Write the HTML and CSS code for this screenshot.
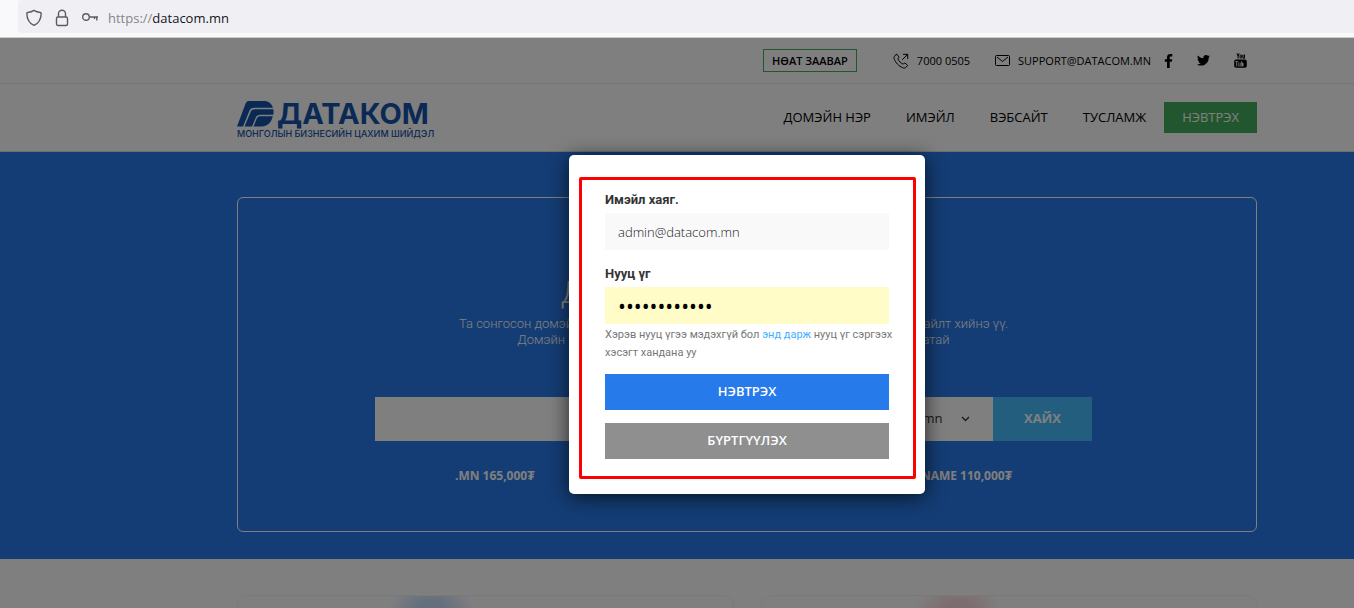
FILE: index.html
```html
<!DOCTYPE html>
<html lang="mn">
<head>
  <meta charset="UTF-8">
  <meta name="viewport" content="width=device-width, initial-scale=1.0">
  <title>Датаком</title>
  <link rel="stylesheet" href="styles.css">
</head>
<body>

  <div class="browser">
    <div class="address">
      <svg width="16" height="18" viewBox="0 0 16 18" fill="none" stroke="#5b5b66" stroke-width="1.4" stroke-linejoin="round"><path d="M8 1.4c2 1.4 4 1.9 6.3 2.1.8.1.9.5.9 1C15 10.3 12.5 14.5 8 16.4 3.5 14.5 1 10.3.8 4.5c0-.5.1-.9.9-1C4 3.3 6 2.8 8 1.4z"/></svg>
      <svg width="14" height="18" viewBox="0 0 14 18" fill="none" stroke="#5b5b66" stroke-width="1.4"><rect x="1.5" y="8" width="11" height="8.5" rx="1.5"/><path d="M3.5 8V4.7a3.5 3.5 0 0 1 7 0V8"/></svg>
      <svg width="18" height="12" viewBox="0 0 18 12" fill="none" stroke="#5b5b66" stroke-width="1.4"><circle cx="4" cy="5" r="3.3"/><path d="M7.3 5H16M12.500 5v2M14.800 5v3.500"/></svg>
      <span class="url"><span class="scheme">https://</span>datacom.mn</span>
    </div>
  </div>

  <div class="page">
    <div class="topbar">
      <div class="container topbar-row">
        <a class="vat" href="#">НӨАТ ЗААВАР</a>
        <a class="contact phone" href="tel:70000505">
          <svg width="16" height="16" viewBox="0 0 16 16" fill="none" stroke="currentColor" stroke-width="1" stroke-linejoin="round" stroke-linecap="round"><path d="M3.2 1.5 1.5 3.2C.3 4.4 1.5 8 4.6 11.2 7.8 14.4 11.3 15.8 12.7 14.6l1.7-1.7c.3-.3.3-.6 0-.9l-2.300-1.800c-.3-.2-.6-.2-.9 0l-1 1c-1.800-.6-4.700-3.400-5.400-5.400l1-1c.2-.3.2-.6 0-.9L4.100 1.500c-.3-.3-.6-.3-.9 0z"/><path d="M9.500 6.500l5-5M10.500 1.300h4.200v4.200"/></svg>
          7000 0505
        </a>
        <a class="contact mail" href="mailto:support@datacom.mn">
          <svg width="15" height="11" viewBox="0 0 15 11" fill="none" stroke="currentColor" stroke-width="1"><rect x=".5" y=".5" width="14" height="10" rx="1"/><path d="M2 2l5.500 4.500L13 2"/></svg>
          SUPPORT@DATACOM.MN
        </a>
        <div class="social">
          <a href="#" aria-label="Facebook"><svg width="9" height="14" viewBox="0 0 9 14"><path fill="currentColor" d="M8.300.1v2.500H6.900c-1 0-1.200.4-1.200 1.100v1.500h2.500l-.3 2.500H5.700V14H3V7.700H.8V5.200H3V3.300C3 1.200 4.300 0 6.200 0c1 0 1.800.1 2.100.1z"/></svg></a>
          <a href="#" aria-label="Twitter"><svg width="13" height="11" viewBox="0 0 13 11"><path fill="currentColor" d="M13 1.300c-.4.5-.8 1-1.300 1.300v.4c0 3.500-2.600 7.600-7.500 7.600C2.600 10.600 1.200 10.200 0 9.400c1.400.1 2.800-.2 3.900-1.100-1.200 0-2.100-.8-2.500-1.900.4.1.8.1 1.200 0C1.400 6.200.5 5.100.5 3.800c.4.2.8.3 1.200.3C.5 3.200.1 1.700.9.500c1.300 1.600 3.300 2.700 5.500 2.800C6 1.500 7.300 0 9 0c.8 0 1.500.3 2 .8.6-.1 1.200-.3 1.700-.6-.2.6-.6 1.100-1.200 1.500.5-.1 1-.2 1.500-.4z"/></svg></a>
          <a href="#" aria-label="YouTube"><svg width="13" height="15" viewBox="0 0 13 15"><path fill="none" stroke="currentColor" stroke-width="1" d="M3 .3l1.100 3v2.300M5.200.3l-1.100 3M6.100 2.600c0-1 1.500-1 1.500 0v1.900c0 1-1.500 1-1.500 0zM8.900 1.700v3.200c0 .7 1 .5 1.500-.2V1.700v3.900"/><path fill="currentColor" fill-rule="evenodd" d="M2.200 6.600h8.600c1.300 0 2 .8 2 2v4.200c0 1.200-.7 2-2 2H2.200c-1.300 0-2-.8-2-2V8.600c0-1.200.7-2 2-2zM1.300 8v.8h1v4.600h.9V8.800h1V8zm3.100 1.500v3.200c0 .9.9.9 1.500.3v.4h.7V9.500h-.7v3c-.3.3-.7.4-.7 0v-3zM7.300 8v5.400H8V13c.6.7 1.500.4 1.500-.6v-2c0-1-.9-1.300-1.500-.6V8z"/></svg></a>
        </div>
      </div>
    </div>

    <div class="header">
      <div class="container header-row">
        <a class="logo" href="#">
          <span class="logo-main">
            <svg width="37" height="26" viewBox="0 0 37 26" fill="#1552a8"><path d="M12 0h15c4.500 0 7.800 2.700 9 6.800H17.500c-2.800 0-4.300 1-5.300 3.400L6 25.500H0L8.500 2.800C9.200.8 10.200 0 12 0z"/><path d="M18.300 8.300H36.300c.4 2 .3 3.700 0 5.400H23.500c-2.500 0-3.800.8-4.800 3l-3.700 8.800H7.500l6.300-14.700c.8-1.800 2-2.500 4.500-2.500z"/><path d="M24 15.200h11.800c-1.500 6-5.300 10.300-11.300 10.300h-8l3.300-8c.8-1.700 2-2.300 4.200-2.300z"/></svg>
            <span class="logo-name">ДАТАКОМ</span>
          </span>
          <span class="logo-slogan">МОНГОЛЫН БИЗНЕСИЙН ЦАХИМ ШИЙДЭЛ</span>
        </a>
        <nav class="menu">
          <a href="#">ДОМЭЙН НЭР</a>
          <a href="#">ИМЭЙЛ</a>
          <a href="#">ВЭБСАЙТ</a>
          <a href="#">ТУСЛАМЖ</a>
          <a class="menu-login" href="#">НЭВТРЭХ</a>
        </nav>
      </div>
    </div>

    <div class="hero">
      <div class="container hero-box">
        <h1>Домэйн нэр бүртгүүлэх</h1>
        <p>Та сонгосон домэйн нэрээ энд бичиж оруулаад бүртгэлтэй эсэхийг шалгаж хайлт хийнэ үү.<br>Домэйн нэрийн бүртгэлийн үнэ болон татвар нь нэг жилийн хугацаатай</p>
        <form class="search">
          <input type="text" aria-label="Домэйн нэр">
          <div class="select">
            <select aria-label="Өргөтгөл">
              <option>.mn</option>
              <option>.com</option>
              <option>.name</option>
            </select>
            <svg width="9" height="6" viewBox="0 0 9 6" fill="none" stroke="#333" stroke-width="1.3"><path d="M1 1l3.500 3.500L8 1"/></svg>
          </div>
          <button type="button">ХАЙХ</button>
        </form>
        <div class="prices">
          <span>.MN 165,000₮</span>
          <span>.COM 55,000₮</span>
          <span>.NAME 110,000₮</span>
        </div>
      </div>
    </div>

    <div class="container cards">
      <div class="card card-blue"></div>
      <div class="card card-red"></div>
    </div>

    <div class="overlay">
      <form class="modal">
        <label for="email">Имэйл хаяг.</label>
        <input id="email" type="text" value="admin@datacom.mn">
        <label for="password">Нууц үг</label>
        <input id="password" class="filled" type="password" value="datacom12345">
        <p>Хэрэв нууц үгээ мэдэхгүй бол <a href="#">энд дарж</a> нууц үг сэргээх<br>хэсэгт хандана уу</p>
        <button class="login" type="button">НЭВТРЭХ</button>
        <button class="register" type="button">БҮРТГҮҮЛЭХ</button>
        <div class="highlight"></div>
      </form>
    </div>
  </div>

</body>
</html>
```
FILE: styles.css
```css
* {
  box-sizing: border-box;
}
body {
  margin: 0;
  height: 100vh;
  display: flex;
  flex-direction: column;
  overflow: hidden;
  font-family: "Open Sans", sans-serif;
  font-size: 13px;
  color: #000;
}
a {
  color: inherit;
  text-decoration: none;
}

/* browser bar */
.browser {
  height: 38px;
  flex: none;
  padding-left: 18px;
  background: #f9f9fb;
  border-bottom: 1px solid #ccc;
}
.address {
  display: flex;
  align-items: center;
  gap: 13px;
  height: 33px;
  padding: 2px 8px 0;
  background: #f0f0f4;
  border-radius: 4px 0 0 4px;
}
.url {
  margin-left: -5px;
  color: #15141a;
}
.scheme {
  color: #85858c;
}

/* the site is wider than the window */
.page {
  position: relative;
  flex: 1;
  min-height: 0;
  margin-right: -140px;
  display: flex;
  flex-direction: column;
  background: #fff;
}
.container {
  width: 100%;
  max-width: 1020px;
  margin: 0 auto;
}

.topbar {
  border-bottom: 1px solid #e8e8e8;
}
.topbar-row {
  display: flex;
  align-items: center;
  justify-content: flex-end;
  height: 45px;
  padding-right: 10px;
  font-size: 11px;
}
.vat {
  padding: 3px 8px;
  border: 1px solid #43ac5e;
  font-weight: 600;
  line-height: 15px;
}
.contact {
  display: flex;
  align-items: center;
  gap: 8px;
}
.phone {
  margin-left: 36px;
}
.mail {
  margin-left: 25px;
}
.social {
  display: flex;
  align-items: center;
  gap: 24px;
  margin-left: 13px;
}
.social a {
  display: flex;
}

.header {
  border-bottom: 1px solid #ddd;
}
.header-row {
  display: flex;
  align-items: center;
  justify-content: space-between;
  height: 67px;
}
.logo {
  padding-top: 6px;
  color: #1552a8;
  font-family: Inter, sans-serif;
}
.logo-main {
  display: flex;
  align-items: center;
  gap: 3px;
}
.logo-name {
  font-size: 29px;
  font-weight: 700;
  line-height: 26px;
}
.logo-slogan {
  display: block;
  font-size: 9px;
  font-weight: 500;
  line-height: 14px;
}
.menu {
  display: flex;
  align-items: center;
  gap: 35px;
  line-height: 19px;
}
.menu-login {
  margin-left: -17px;
  padding: 6px 18px;
  background: #43ac5e;
  color: #fff;
}

.hero {
  padding: 45px 0 27px;
  background: #287aea;
}
.hero-box {
  height: 335px;
  padding: 76px 164px 0 137px;
  border: 1px solid #fff;
  border-radius: 6px;
  color: #fff;
  text-align: center;
}
.hero h1 {
  margin: 0 0 6px;
  font-family: Roboto, sans-serif;
  font-size: 32px;
  font-weight: 300;
  line-height: 36px;
}
.hero p {
  margin: 0;
  font-family: Roboto, sans-serif;
  font-weight: 300;
  line-height: 16px;
}
.search {
  display: flex;
  height: 44px;
  margin-top: 49px;
}
.search input {
  flex: 1;
  min-width: 0;
  border: 0;
  padding: 0 14px;
  background: #fff;
}
.select {
  position: relative;
  width: 86px;
  background: #fff;
}
.select select {
  appearance: none;
  width: 100%;
  height: 100%;
  padding: 0 12px 2px;
  border: 0;
  background: #fff;
  color: #333;
  font-family: "Open Sans", sans-serif;
  font-size: 13px;
}
.select svg {
  position: absolute;
  right: 23px;
  top: 19px;
}
.search button {
  width: 99px;
  padding: 0 0 2px;
  border: 0;
  background: #48bcff;
  color: #fff;
  font-family: "Open Sans", sans-serif;
  font-size: 13px;
  font-weight: 700;
}
.prices {
  display: flex;
  justify-content: space-between;
  padding: 0 80px;
  margin-top: 26px;
  font-size: 12px;
  font-weight: 700;
  line-height: 18px;
}

.cards {
  display: flex;
  flex: 1;
  gap: 27px;
  padding-top: 36px;
}
.card {
  flex: 1;
  border: 1px solid #f4f4f4;
  border-bottom: 0;
  border-radius: 10px 10px 0 0;
}
.card-blue {
  background: radial-gradient(ellipse 44px 30px at 193px 14px, #c9defa 30%, #fff 100%);
}
.card-red {
  background: radial-gradient(ellipse 44px 30px at 196px 14px, #f8d9de 30%, #fff 100%);
}

/* login window */
.overlay {
  position: absolute;
  inset: 0;
  padding-top: 117px;
  background: rgba(0, 0, 0, 0.5);
}
.modal {
  position: relative;
  width: 356px;
  margin: 0 auto;
  padding: 36px 36px 35px;
  background: #fff;
  border-radius: 5px;
  box-shadow: 0 3px 20px rgba(0, 0, 0, 0.7);
}
.modal label {
  display: block;
  margin-bottom: 4px;
  color: #333;
  font-family: Roboto, sans-serif;
  font-weight: 700;
  line-height: 18px;
}
.modal input {
  display: block;
  width: 100%;
  height: 37px;
  margin-bottom: 15px;
  padding: 0 13px;
  border: 0;
  background: #f9f9f9;
  color: #222;
  font-family: "Open Sans", sans-serif;
  font-size: 13px;
  font-weight: 300;
}
.modal input.filled {
  margin-bottom: 2px;
  background: #fffcc8;
  color: #000;
  font-size: 21px;
  font-weight: 400;
}
.modal p {
  margin: 0 0 12px;
  color: #777;
  font-family: Roboto, sans-serif;
  font-size: 11px;
  line-height: 18px;
  white-space: nowrap;
}
.modal p a {
  color: #3fb0ff;
}
.modal button {
  display: block;
  width: 100%;
  height: 36px;
  padding: 0 0 2px;
  border: 0;
  color: #fff;
  font-family: "Open Sans", sans-serif;
  font-size: 13px;
  font-weight: 600;
}
.modal .login {
  margin-bottom: 13px;
  background: #277aea;
}
.modal .register {
  background: #8f8f8f;
}
.highlight {
  position: absolute;
  inset: 22px 9px 15px 10px;
  border: 3px solid #fe0000;
  border-radius: 2px;
  pointer-events: none;
}
```
